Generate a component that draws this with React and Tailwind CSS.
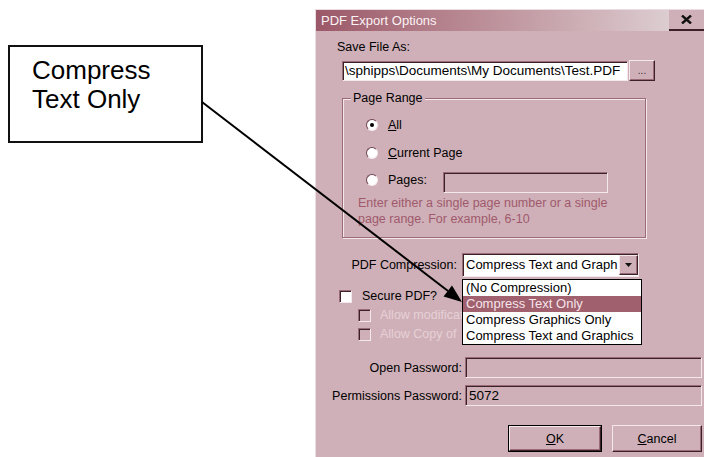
import React from "react";

const sunken =
  "border border-t-[#9a6c78] border-l-[#9a6c78] border-b-[#f4e8ec] border-r-[#f4e8ec] shadow-[inset_1px_1px_0_#3c2228]";
const raised =
  "border border-t-[#f4e8ec] border-l-[#f4e8ec] border-b-[#3c2228] border-r-[#3c2228] shadow-[inset_-1px_-1px_0_#9a6c78]";

function Radio({ checked }) {
  return (
    <div className="w-[12px] h-[12px] shrink-0 rounded-full bg-white border border-t-[#6e4250] border-l-[#6e4250] border-b-[#f4e8ec] border-r-[#f4e8ec] flex items-center justify-center">
      {checked && <div className="w-[4px] h-[4px] rounded-full bg-black" />}
    </div>
  );
}

function Check({ disabled }) {
  return (
    <div
      className={`w-[13px] h-[13px] shrink-0 ${sunken} ${
        disabled ? "bg-[#cfb0b8]" : "bg-white"
      }`}
    />
  );
}

export default function App() {
  return (
    <div className="relative w-[704px] h-[457px] overflow-hidden bg-white flex font-['Liberation_Sans',Arial,sans-serif]">
      {/* annotation */}
      <div className="w-[315px] shrink-0 pt-[45px] pl-[8px]">
        <div className="w-[195px] h-[98px] border-2 border-[#111] pl-[22px] pt-[9px] text-[26px] leading-[29px] text-black">
          Compress
          <br />
          Text Only
        </div>
      </div>

      {/* dialog */}
      <div className="w-[389px] shrink-0 mt-[9px] bg-[#cfb0b8] border-l border-t border-[#eadce0] flex flex-col text-[12.5px] leading-[16px] text-black">
        {/* title bar */}
        <div className="h-[21px] flex shrink-0">
          <div className="flex-1 bg-linear-to-r from-[#9b5868] to-[#dccdd1] text-[#fbf2f4] text-[13px] leading-[21px] pl-[5px]">
            PDF Export Options
          </div>
          <div className="w-[35px] border-b-2 border-[#3c2228] flex items-center justify-center">
            <svg width="11" height="9" viewBox="0 0 11 9">
              <path d="M1 0.5 L10 8.5 M10 0.5 L1 8.5" stroke="#111" strokeWidth="2.4" />
            </svg>
          </div>
        </div>

        {/* Save File As */}
        <div className="mt-[8px] ml-[21px]">Save File As:</div>
        <div className="mt-[5px] ml-[26px] flex items-start">
          <div
            className={`mt-[1px] w-[286px] h-[20px] bg-white ${sunken} pl-[2px] text-[13.5px] leading-[17px] whitespace-nowrap overflow-hidden`}
          >
            \sphipps\Documents\My Documents\Test.PDF
          </div>
          <div
            className={`ml-[1px] w-[26px] h-[21px] ${raised} flex items-center justify-center text-[10px] leading-[10px] text-[#333]`}
          >
            ...
          </div>
        </div>

        {/* Page Range group */}
        <div className="mt-[17px] ml-[26px] w-[304px] h-[140px] border border-[#9a6c78] shadow-[inset_1px_1px_0_#f4e8ec,1px_1px_0_#f4e8ec] flex flex-col">
          <div className="w-fit -mt-[9px] ml-[8px] px-[2px] bg-[#cfb0b8]">Page Range</div>
          <div className="mt-[11px] pl-[23px] h-[16px] flex items-center">
            <Radio checked />
            <span className="ml-[10px]">
              <span className="underline">A</span>ll
            </span>
          </div>
          <div className="mt-[12px] pl-[23px] h-[16px] flex items-center">
            <Radio />
            <span className="ml-[10px]">
              <span className="underline">C</span>urrent Page
            </span>
          </div>
          <div className="mt-[11px] pl-[23px] flex items-start">
            <div className="mt-[2px]">
              <Radio />
            </div>
            <span className="ml-[10px] w-[55px]">Pages:</span>
            <div className={`w-[165px] h-[21px] bg-[#cfb0b8] ${sunken}`} />
          </div>
          <div className="mt-[2px] pl-[15px] text-[#a05a6c] whitespace-nowrap">
            Enter either a single page number or a single
            <br />
            page range. For example, 6-10
          </div>
        </div>

        {/* PDF Compression */}
        <div className="mt-[15px] flex items-center">
          <div className="w-[141px] text-right">PDF Compression:</div>
          <div className="ml-[5px] relative w-[177px] h-[24px]">
            <div className={`w-full h-full bg-white ${sunken} flex items-center`}>
              <div className="flex-1 pl-[3px] whitespace-nowrap overflow-hidden text-[13px]">
                Compress Text and Graph
              </div>
              <div
                className={`w-[19px] h-[20px] bg-[#cfb0b8] ${raised} flex items-center justify-center shrink-0`}
              >
                <svg width="7" height="4" viewBox="0 0 7 4">
                  <path d="M0 0 H7 L3.5 4 Z" fill="#111" />
                </svg>
              </div>
            </div>
            <div className="absolute left-0 top-[26px] w-[180px] border border-black bg-white z-10 whitespace-nowrap text-[13px]">
              <div className="h-[16px] pl-[3px]">(No Compression)</div>
              <div className="h-[16px] pl-[3px] bg-[#a0606e] text-[#f6e4ea]">Compress Text Only</div>
              <div className="h-[16px] pl-[3px]">Compress Graphics Only</div>
              <div className="h-[16px] pl-[3px]">Compress Text and Graphics</div>
            </div>
          </div>
        </div>

        {/* Secure PDF */}
        <div className="mt-[11px] pl-[23px] h-[16px] flex items-center">
          <Check />
          <span className="ml-[10px]">Secure PDF?</span>
        </div>
        <div className="mt-[3px] pl-[42px] h-[16px] flex items-center whitespace-nowrap">
          <Check disabled />
          <span className="ml-[9px] w-[82px] overflow-hidden text-[#e6d0d6]">Allow modifications</span>
        </div>
        <div className="mt-[3px] pl-[42px] h-[16px] flex items-center whitespace-nowrap">
          <Check disabled />
          <span className="ml-[9px] w-[82px] overflow-hidden text-[#e6d0d6]">Allow Copy of</span>
        </div>

        {/* Passwords */}
        <div className="mt-[15px] flex items-center">
          <div className="w-[146px] text-right">Open Password:</div>
          <div className={`ml-[3px] w-[237px] h-[21px] bg-[#cfb0b8] ${sunken}`} />
        </div>
        <div className="mt-[7px] flex items-center">
          <div className="w-[146px] text-right whitespace-nowrap">Permissions Password:</div>
          <div
            className={`ml-[3px] w-[237px] h-[21px] bg-[#cfb0b8] ${sunken} pl-[3px] text-[13.5px] leading-[19px]`}
          >
            5072
          </div>
        </div>

        {/* Buttons */}
        <div className="mt-[19px] pl-[192px] flex gap-[10px]">
          <div className="w-[94px] h-[27px] border border-black">
            <div className={`w-full h-full ${raised} flex items-center justify-center`}>
              <span>
                <span className="underline">O</span>K
              </span>
            </div>
          </div>
          <div className={`w-[90px] h-[27px] ${raised} flex items-center justify-center`}>
            <span>
              <span className="underline">C</span>ancel
            </span>
          </div>
        </div>
      </div>

      {/* callout arrow */}
      <svg className="absolute left-0 top-0 pointer-events-none z-20" width="704" height="457">
        <line x1="202" y1="102" x2="448" y2="291" stroke="#000" strokeWidth="2" />
        <polygon points="462,302 443.5,296.6 452,285.5" fill="#000" />
      </svg>
    </div>
  );
}
